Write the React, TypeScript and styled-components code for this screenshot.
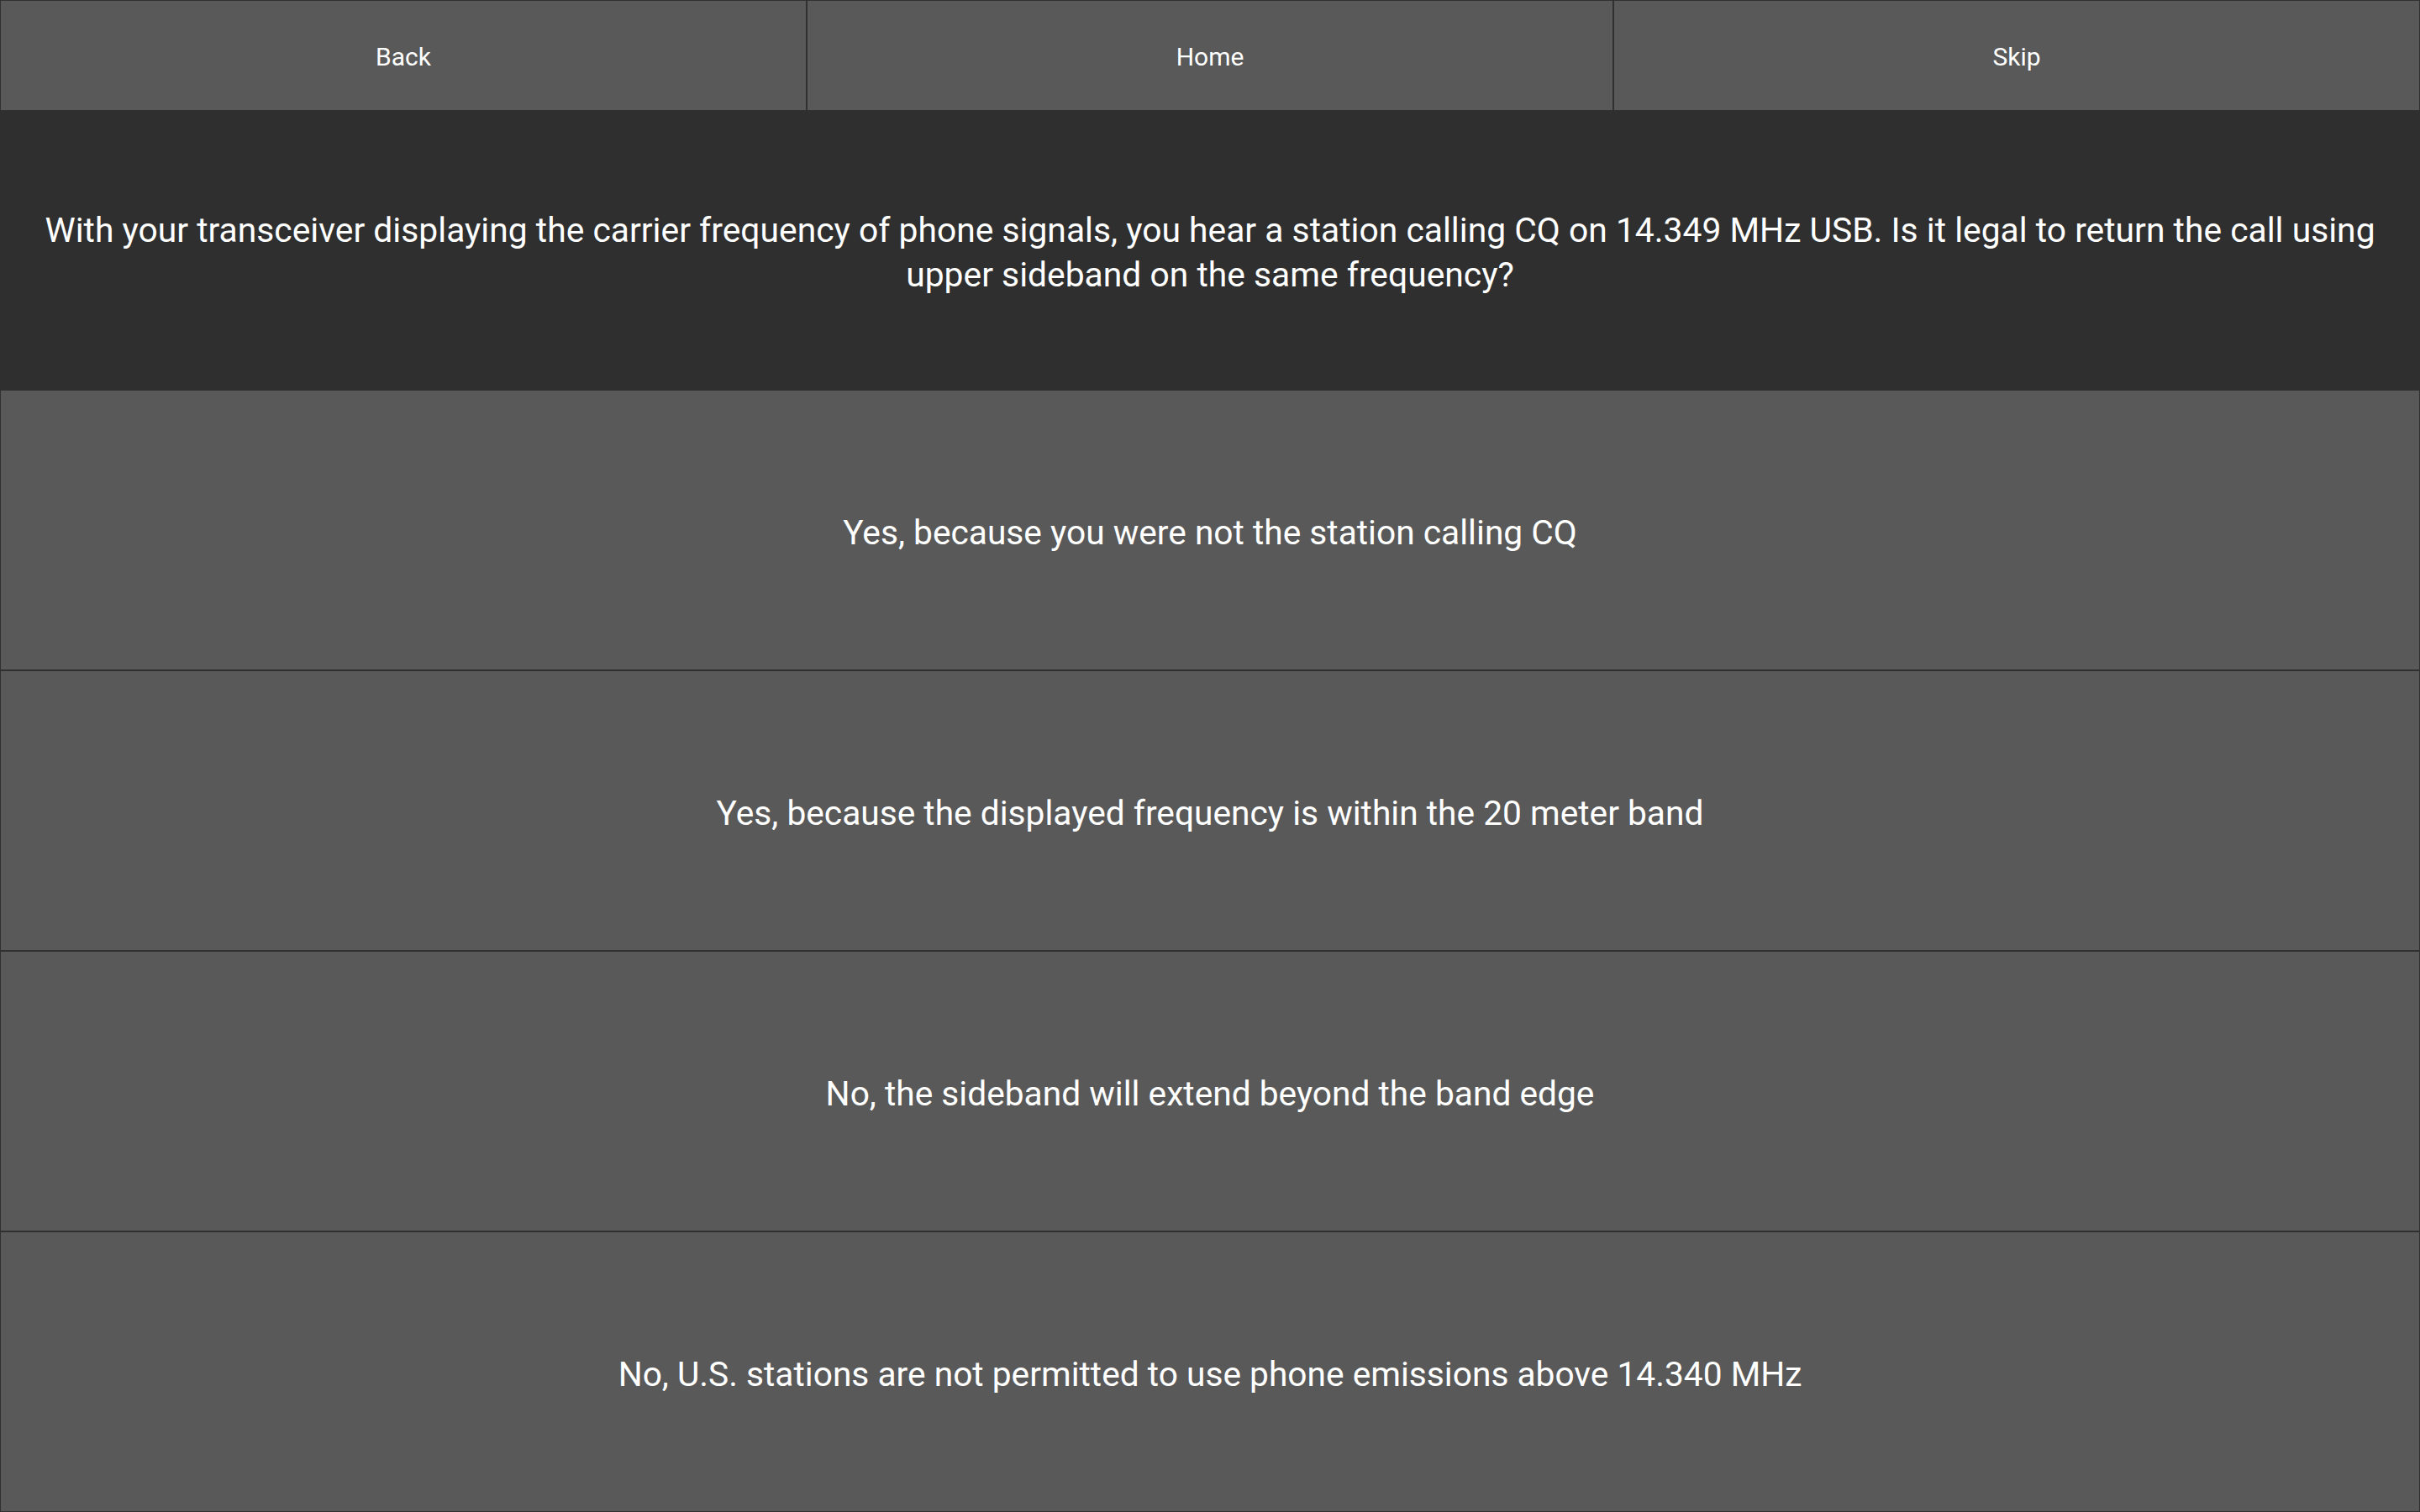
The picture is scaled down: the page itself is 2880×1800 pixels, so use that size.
import React, { FC } from 'react'
import styled, { createGlobalStyle } from 'styled-components'

const GlobalStyle = createGlobalStyle`
  html, body {
    margin: 0;
    padding: 0;
    background: #2f2f2f;
  }
  * {
    box-sizing: border-box;
  }
`

const Screen = styled.div`
  display: flex;
  flex-direction: column;
  width: 100vw;
  height: 100vh;
  background: #2f2f2f;
  font-family: Roboto, 'Liberation Sans', sans-serif;
  color: #ffffff;
`

const NavBar = styled.div`
  display: grid;
  grid-template-columns: repeat(3, 1fr);
  height: 132px;
  flex: none;
`

const NavButton = styled.button`
  display: flex;
  align-items: center;
  justify-content: center;
  margin: 0;
  padding: 3px 0 0;
  background: #595959;
  border: 1px solid #303030;
  color: #ffffff;
  font-family: inherit;
  font-size: 30px;
  cursor: pointer;
`

const Question = styled.div`
  flex: 1;
  display: flex;
  align-items: center;
  justify-content: center;
  padding: 5px 40px 0;
  text-align: center;
  font-size: 40.8px;
  line-height: 53px;
`

const Answer = styled.button`
  flex: 1;
  display: flex;
  align-items: center;
  justify-content: center;
  margin: 0;
  padding: 5px 40px 0;
  background: #595959;
  border: 1px solid #303030;
  color: #ffffff;
  font-family: inherit;
  font-size: 40.7px;
  cursor: pointer;
`

const answers = [
  'Yes, because you were not the station calling CQ',
  'Yes, because the displayed frequency is within the 20 meter band',
  'No, the sideband will extend beyond the band edge',
  'No, U.S. stations are not permitted to use phone emissions above 14.340 MHz'
]

const App: FC = () => {
  return (
    <Screen>
      <GlobalStyle />
      <NavBar>
        <NavButton type="button">Back</NavButton>
        <NavButton type="button">Home</NavButton>
        <NavButton type="button">Skip</NavButton>
      </NavBar>
      <Question>
        With your transceiver displaying the carrier frequency of phone signals, you hear a station
        calling CQ on 14.349 MHz USB. Is it legal to return the call using upper sideband on the
        same frequency?
      </Question>
      {answers.map((answer) => (
        <Answer type="button" key={answer}>
          {answer}
        </Answer>
      ))}
    </Screen>
  )
}

export default App
